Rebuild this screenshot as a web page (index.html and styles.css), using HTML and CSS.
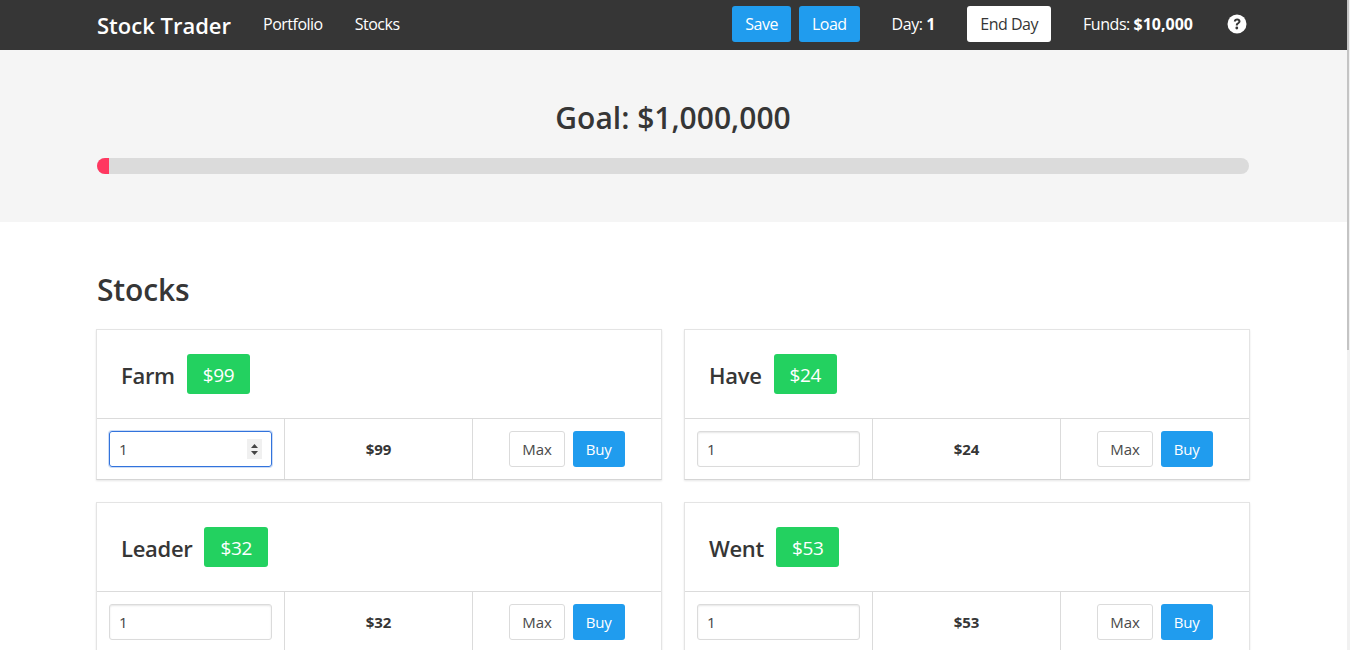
FILE: index.html
```html
<!DOCTYPE html>
<html lang="en">
<head>
  <meta charset="UTF-8">
  <title>Stock Trader</title>
  <meta name="viewport" content="width=device-width, initial-scale=1.0">
  <link rel="stylesheet" href="styles.css">
</head>
<body>
  <header class="main-nav">
    <div class="container nav-inner">
      <div class="nav-left">
        <a class="site-title" href="#">Stock Trader</a>
        <a class="nav-link" href="#">Portfolio</a>
        <a class="nav-link" href="#">Stocks</a>
      </div>
      <div class="nav-right">
        <button class="btn btn-blue">Save</button>
        <button class="btn btn-blue">Load</button>
        <span class="nav-text day">Day: <b>1</b></span>
        <button class="btn btn-white">End Day</button>
        <span class="nav-text funds">Funds: <b>$10,000</b></span>
        <svg class="help" width="20" height="20" viewBox="0 0 20 20">
          <circle cx="10" cy="10" r="9.5" fill="#fff"/>
          <path d="M6.8 7.6C6.9 5.6 8.3 4.5 10.2 4.5c1.9 0 3.3 1.1 3.3 2.8 0 1.3-.7 2-1.7 2.6-.8.5-1 .8-1 1.6H8.8c0-1.4.4-2.1 1.4-2.7.8-.5 1.2-.8 1.2-1.4 0-.6-.5-1-1.2-1-.8 0-1.3.4-1.4 1.2z" fill="#363636"/>
          <circle cx="9.8" cy="14" r="1.4" fill="#363636"/>
        </svg>
      </div>
    </div>
  </header>

  <section class="hero">
    <div class="container">
      <h2 class="goal">Goal: $1,000,000</h2>
      <div class="progress"><div class="progress-bar" style="width:1%"></div></div>
    </div>
  </section>

  <main class="container content">
    <h1 class="section-title">Stocks</h1>
    <div class="stock-grid">
      <div class="card">
        <div class="card-head"><span class="stock-name">Farm</span><span class="price-tag">$99</span></div>
        <div class="card-foot">
          <div class="cell"><div class="qty qty-focus"><span>1</span><svg class="spin" width="15" height="20" viewBox="0 0 15 20"><rect width="15" height="20" fill="#f0f0f0"/><path d="M7.5 5l3.5 4H4zM7.5 16L4 12h7z" fill="#444"/></svg></div></div>
          <div class="cell cell-total">$99</div>
          <div class="cell cell-actions"><button class="btn btn-outline">Max</button><button class="btn btn-blue">Buy</button></div>
        </div>
      </div>
      <div class="card">
        <div class="card-head"><span class="stock-name">Have</span><span class="price-tag">$24</span></div>
        <div class="card-foot">
          <div class="cell"><div class="qty"><span>1</span></div></div>
          <div class="cell cell-total">$24</div>
          <div class="cell cell-actions"><button class="btn btn-outline">Max</button><button class="btn btn-blue">Buy</button></div>
        </div>
      </div>
      <div class="card">
        <div class="card-head"><span class="stock-name">Leader</span><span class="price-tag">$32</span></div>
        <div class="card-foot">
          <div class="cell"><div class="qty"><span>1</span></div></div>
          <div class="cell cell-total">$32</div>
          <div class="cell cell-actions"><button class="btn btn-outline">Max</button><button class="btn btn-blue">Buy</button></div>
        </div>
      </div>
      <div class="card">
        <div class="card-head"><span class="stock-name">Went</span><span class="price-tag">$53</span></div>
        <div class="card-foot">
          <div class="cell"><div class="qty"><span>1</span></div></div>
          <div class="cell cell-total">$53</div>
          <div class="cell cell-actions"><button class="btn btn-outline">Max</button><button class="btn btn-blue">Buy</button></div>
        </div>
      </div>
    </div>
  </main>

  <div class="scroll-track"><div class="scroll-thumb"></div></div>
</body>
</html>
```

FILE: styles.css
```css
*{box-sizing:border-box;margin:0;padding:0}
html,body{height:100%;overflow:hidden}
body{font-family:"Open Sans",Arial,sans-serif;font-size:16px;color:#363636;background:#fff}

.container{width:1152px;margin-left:97px}

.main-nav{height:50px;background:#363636}
.nav-inner{display:flex;justify-content:space-between;align-items:center;height:50px}
.nav-left{display:flex;align-items:center}
.site-title{color:#fff;font-size:22px;font-weight:600;text-decoration:none;margin-right:32px}
.nav-link{color:#fff;text-decoration:none;font-size:16px;letter-spacing:-.5px;margin:0 32px 2px 0}
.nav-right{display:flex;align-items:center;gap:8px;color:#fff;margin-bottom:2px}
.nav-text{font-size:16px;letter-spacing:-.45px}
.nav-text b{letter-spacing:0}
.day{margin:0 24px}
.funds{margin:0 26px 0 24px}
.help{display:block;margin-right:2px}

.btn{display:inline-flex;align-items:center;justify-content:center;height:36px;padding:0 12px;border:1px solid transparent;border-radius:3px;font:inherit;font-size:16px;letter-spacing:-.5px;cursor:pointer}
.btn-blue{background:#209cee;color:#fff}
.btn-white{background:#fff;color:#363636}
.btn-outline{background:#fff;color:#4a4a4a;border-color:#dbdbdb}

.hero{height:172px;background:#f5f5f5;padding-top:48px}
.goal{font-size:30px;font-weight:600;line-height:40px;text-align:center}
.progress{height:16px;margin-top:20px;background:#dbdbdb;border-radius:8px;overflow:hidden}
.progress-bar{height:100%;background:#ff3860}

.content{padding-top:48px}
.section-title{font-size:30px;font-weight:600;line-height:40px;letter-spacing:-.15px;margin-bottom:19px}
.stock-grid{display:grid;grid-template-columns:566px 566px;gap:22px;margin-left:-1px;width:1154px}
.card{border:1px solid #e4e4e4;border-bottom-color:#d5d5d5;box-shadow:0 1px 2px rgba(10,10,10,.1);height:151px;background:#fff}
.card-head{display:flex;align-items:center;gap:12px;height:89px;padding:0 24px;border-bottom:1px solid #dbdbdb}
.stock-name{font-size:22px;font-weight:600;letter-spacing:-.3px;padding-top:2px}
.price-tag{display:flex;align-items:center;height:40px;padding:2px 16px 0;background:#23d160;color:#fff;font-size:19px;border-radius:3px;letter-spacing:-.4px}
.card-foot{display:grid;grid-template-columns:187px 188px 1fr;height:60px}
.cell{display:flex;align-items:center;padding:0 12px}
.cell + .cell{border-left:1px solid #dbdbdb}
.cell-total{justify-content:center;font-size:15px;font-weight:700;letter-spacing:-.1px}
.cell-actions{justify-content:center;gap:8px}
.cell-actions .btn{padding:0 12px;font-size:15px;letter-spacing:-.1px}
.qty{display:flex;align-items:center;justify-content:space-between;width:100%;height:36px;padding:0 9px;border:1px solid #dbdbdb;border-radius:3px;box-shadow:inset 0 1px 2px rgba(10,10,10,.1);font-size:15px;color:#444}
.qty-focus{border-color:#3273dc;box-shadow:0 0 0 1px rgba(50,115,220,.25)}
.spin{display:block}

.scroll-track{position:fixed;top:0;right:0;width:3px;height:100%;background:#f1f1f1}
.scroll-thumb{width:2px;height:350px;background:#c4c4c4}
```
